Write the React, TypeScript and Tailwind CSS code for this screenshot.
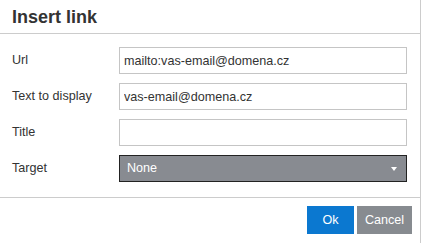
import { useState } from "react";

const inputCls =
  "h-[27px] w-[288px] border border-[#c5c5c5] bg-white px-[4px] text-[12.6px] text-[#333] outline-none";

function Row({ label, children }: { label: string; children: React.ReactNode }) {
  return (
    <div className="flex items-center">
      <label className="w-[107px] text-[12.6px] text-[#333]">{label}</label>
      {children}
    </div>
  );
}

export default function App() {
  const [url, setUrl] = useState("mailto:vas-email@domena.cz");
  const [text, setText] = useState("vas-email@domena.cz");
  const [title, setTitle] = useState("");

  return (
    <div className="h-[243px] w-[421px] border-r border-[#cccccc] bg-white font-['Liberation_Sans',Arial,sans-serif]">
      <div className="flex h-[34px] items-center border-b border-[#cccccc] pl-[12px]">
        <h1 className="text-[18px] font-bold leading-none text-[#333]">Insert link</h1>
      </div>

      <div className="flex h-[164px] flex-col gap-[9px] border-b border-[#cccccc] pl-[12px] pt-[13px]">
        <Row label="Url">
          <input className={inputCls} value={url} onChange={(e) => setUrl(e.target.value)} />
        </Row>
        <Row label="Text to display">
          <input className={inputCls} value={text} onChange={(e) => setText(e.target.value)} />
        </Row>
        <Row label="Title">
          <input className={inputCls} value={title} onChange={(e) => setTitle(e.target.value)} />
        </Row>
        <Row label="Target">
          <div className="flex h-[27px] w-[288px] items-center justify-between border border-[#222] bg-[#888b91] pl-[7px] pr-[9px] text-[12.6px] text-white">
            <span>None</span>
            <svg width="6" height="4" viewBox="0 0 6 4">
              <path d="M0 0h6L3 4z" fill="#fff" />
            </svg>
          </div>
        </Row>
      </div>

      <div className="flex justify-end gap-[3px] pr-[8px] pt-[8px]">
        <button className="h-[28px] w-[47px] bg-[#0b78d0] text-[12.6px] text-white">Ok</button>
        <button className="h-[28px] w-[55px] bg-[#878b90] text-[12.6px] text-white">Cancel</button>
      </div>
    </div>
  );
}
